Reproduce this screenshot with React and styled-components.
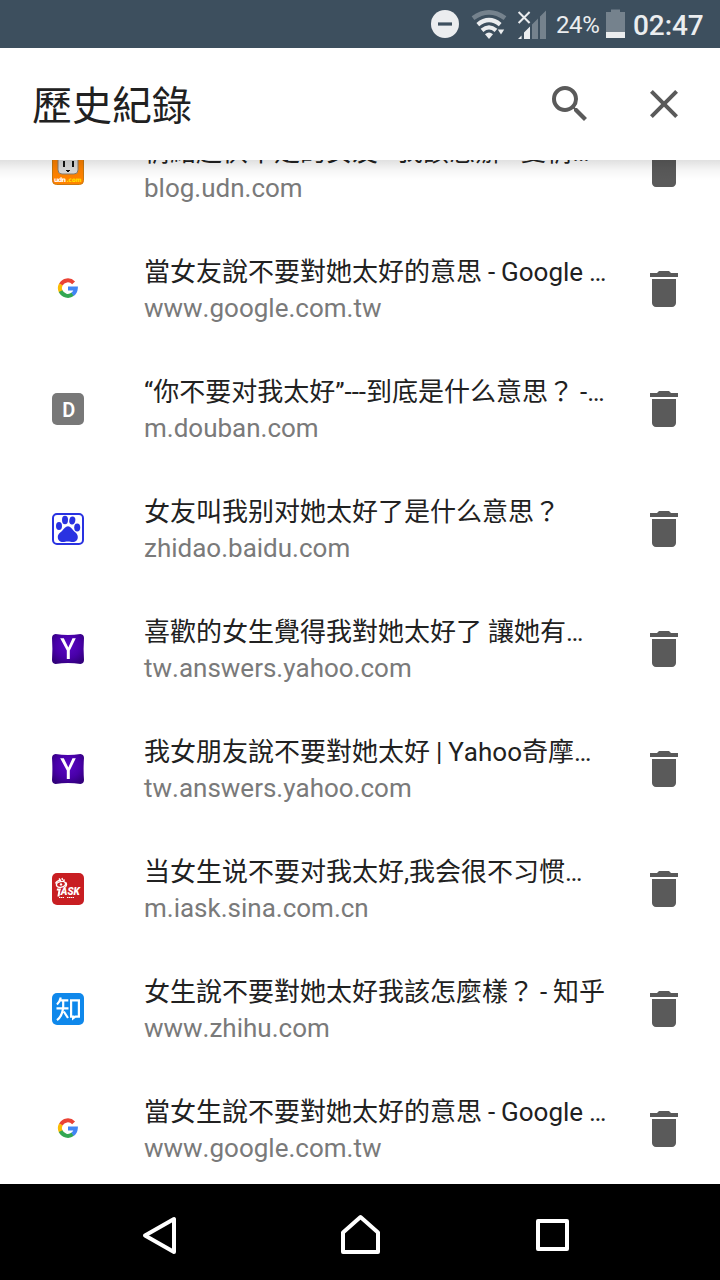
import styled, { createGlobalStyle } from "styled-components";

const GlobalStyle = createGlobalStyle`
  * {
    box-sizing: border-box;
  }
  body {
    margin: 0;
    background-color: #fff;
    font-family: Roboto, "Noto Sans CJK TC", sans-serif;
    font-kerning: none;
  }
`;

const Screen = styled.div`
  display: flex;
  flex-direction: column;
  width: 720px;
  height: 1280px;
  overflow: hidden;
  background-color: #fff;
`;

const StatusBar = styled.div`
  display: flex;
  flex-shrink: 0;
  align-items: center;
  justify-content: flex-end;
  height: 48px;
  padding-right: 16px;
  background-color: #3d4f5e;
  color: #ebedef;
  svg {
    display: block;
    flex-shrink: 0;
  }
`;

const Percent = styled.span`
  width: 43px;
  margin: 2px 7px 0 10px;
  font-size: 24px;
  line-height: 28px;
  letter-spacing: -0.4px;
  white-space: nowrap;
`;

const Clock = styled.span`
  width: 71px;
  margin: 3px 0 0 8px;
  font-size: 28px;
  font-weight: 500;
  line-height: 32px;
  letter-spacing: -0.1px;
  white-space: nowrap;
`;

const Toolbar = styled.header`
  position: relative;
  z-index: 1;
  display: flex;
  flex-shrink: 0;
  align-items: center;
  height: 112px;
  padding: 0 32px;
  background-color: #fff;
  &::after {
    content: "";
    position: absolute;
    top: 100%;
    left: 0;
    right: 0;
    height: 20px;
    background: linear-gradient(
      rgba(0, 0, 0, 0.12),
      rgba(0, 0, 0, 0.04) 50%,
      rgba(0, 0, 0, 0)
    );
  }
`;

const Title = styled.h1`
  flex: 1;
  margin: 0;
  padding-top: 5px;
  font-size: 40px;
  font-weight: 400;
  line-height: 48px;
  color: #212121;
`;

const IconButton = styled.button`
  display: block;
  width: 48px;
  height: 48px;
  margin-left: ${(props) => props.$gap || 0}px;
  padding: 0;
  border: none;
  background: none;
  color: #5a5a5a;
  svg {
    display: block;
    width: 48px;
    height: 48px;
  }
`;

const Viewport = styled.main`
  flex: 1;
  min-height: 0;
  overflow: hidden;
`;

// The list is scrolled a bit, so the first row is partly under the toolbar
const List = styled.ul`
  margin: -51px 0 0;
  padding: 0;
  list-style: none;
`;

const Row = styled.li`
  display: flex;
  align-items: center;
  height: 120px;
  padding: 0 32px 0 52px;
`;

const Favicon = styled.div`
  flex-shrink: 0;
  width: 32px;
  height: 32px;
  margin-right: 60px;
  svg {
    display: block;
  }
`;

const Info = styled.div`
  flex: 1;
  min-width: 0;
  padding: 2px 32px 0 0;
`;

const PageTitle = styled.p`
  margin: 0;
  font-size: 26px;
  line-height: 36px;
  word-spacing: -0.5px;
  color: #212121;
  white-space: nowrap;
`;

const Domain = styled.p`
  margin: 0;
  font-size: 26px;
  line-height: 36px;
  color: #7a7a7a;
  white-space: nowrap;
`;

const NavBar = styled.nav`
  display: flex;
  flex-shrink: 0;
  align-items: center;
  justify-content: space-between;
  height: 96px;
  padding: 6px 136px 0;
  background-color: #000;
`;

const NavIcon = styled.svg`
  display: block;
  width: 48px;
  height: 48px;
  fill: none;
  stroke: #fff;
  stroke-width: 4;
  stroke-linejoin: round;
`;

const StatusIcons = () => (
  <svg width="116" height="48" viewBox="430 0 116 48" fill="#ebedef">
    <circle cx="445" cy="24" r="14" />
    <rect x="438" y="22.4" width="14" height="3.2" fill="#3d4f5e" />
    <g fill="none" stroke="#ebedef">
      <path
        d="M473 18.2Q489 6.5 505 18.2"
        stroke="#75828d"
        strokeWidth="4.6"
      />
      <path d="M477.8 24.6Q489 15.6 500.2 24.6" strokeWidth="4.4" />
      <path d="M482 30.4Q489 24.4 496 30.4" strokeWidth="4.2" />
    </g>
    <path d="M485 34.2Q489 30.8 493 34.2L489 39z" />
    <path d="M497.8 29.6h6.4L501 34.4z" />
    <path d="M518.6 12l11 11M529.6 12l-11 11" stroke="#ebedef" strokeWidth="2" />
    <path d="M518 39l3.6-3.6V39zM524 32.5l6-6V39h-6z" />
    <path d="M532 24.5l6-6V39h-6zM540 16.5l6-6V39h-6z" fill="#75828d" />
  </svg>
);

const Battery = () => (
  <svg width="19" height="48" viewBox="606 0 19 48">
    <path d="M611 9.5h9V12h5v20h-19V12h5z" fill="#75828d" />
    <rect x="606" y="32" width="19" height="6" fill="#ebedef" />
  </svg>
);

const SearchIcon = () => (
  <svg viewBox="0 0 24 24" fill="currentColor">
    <path d="M15.5 14h-.79l-.28-.27A6.47 6.47 0 0 0 16 9.5 6.5 6.5 0 1 0 9.5 16c1.61 0 3.09-.59 4.23-1.57l.27.28v.79l5 4.99L20.49 19l-4.99-5zm-6 0C7.01 14 5 11.99 5 9.5S7.01 5 9.5 5 14 7.01 14 9.5 11.99 14 9.5 14z" />
  </svg>
);

const CloseIcon = () => (
  <svg viewBox="0 0 24 24" fill="currentColor">
    <path d="M19 6.41L17.59 5 12 10.59 6.41 5 5 6.41 10.59 12 5 17.59 6.41 19 12 13.41 17.59 19 19 17.59 13.41 12z" />
  </svg>
);

const TrashIcon = () => (
  <svg viewBox="0 0 24 24" fill="currentColor">
    <path d="M6 19c0 1.1.9 2 2 2h8c1.1 0 2-.9 2-2V7H6v12zM19 4h-3.5l-1-1h-5l-1 1H5v2h14V4z" />
  </svg>
);

const UdnIcon = () => (
  <svg width="32" height="32" viewBox="0 0 32 32">
    <rect x=".5" y=".5" width="31" height="31" rx="4" fill="#ff8200" stroke="#c9790f" />
    <rect x="6" y="3" width="20" height="18" rx="4" fill="#dcdcdc" stroke="#8b7d6a" />
    <path d="M11 8h2v6h-2zM20 8h2v6h-2zM14 17h4v1h-1v1h-2v-1h-1z" fill="#111" />
    <text x="2" y="28.6" fontFamily="DejaVu Sans" fontSize="6.4" fontWeight="700" fill="#fff" textLength="12">
      udn
    </text>
    <text x="14.5" y="28.6" fontFamily="DejaVu Sans" fontSize="6.2" fontWeight="700" fill="#ffe600" textLength="15" lengthAdjust="spacingAndGlyphs">
      .com
    </text>
  </svg>
);

const GoogleIcon = () => (
  <svg width="32" height="32" viewBox="0 0 32 32">
    <g fill="none" strokeWidth="4">
      <path d="M21.6 9.800A8 8 0 0 0 8.800 11.600" stroke="#ea4335" />
      <path d="M8.800 11.400A8 8 0 0 0 8.800 18.800" stroke="#fbbc05" />
      <path d="M8.600 18.200A8 8 0 0 0 20.800 21.200" stroke="#34a853" />
      <path d="M16 15.400h7.800A8 8 0 0 1 20.600 21.300" stroke="#4285f4" />
    </g>
  </svg>
);

const LetterIcon = () => (
  <svg width="32" height="32" viewBox="0 0 32 32">
    <rect width="32" height="32" rx="5" fill="#787878" />
    <text x="16.700" y="23.700" textAnchor="middle" fontFamily="Roboto" fontSize="20" fontWeight="600" fill="#fff">
      D
    </text>
  </svg>
);

const BaiduIcon = () => (
  <svg width="32" height="32" viewBox="0 0 32 32" fill="#2932e1">
    <rect x="1" y="1" width="30" height="30" rx="4" fill="#fff" stroke="#2932e1" strokeWidth="2" />
    <ellipse cx="7" cy="13" rx="3" ry="4" />
    <ellipse cx="13" cy="7" rx="3" ry="4.2" />
    <ellipse cx="20.3" cy="7.5" rx="3" ry="4" transform="rotate(10 20.3 7.5)" />
    <ellipse cx="25.2" cy="14.5" rx="3" ry="4" />
    <path d="M16 13.2c2.6 0 3.6 2.4 5.4 4.4s4.4 3.4 4.4 6.4c0 3.4-2.2 5-5 5-1.8 0-3-.6-5-.6s-3.2.6-5 .6c-2.8 0-5-1.6-5-5 0-3 2.8-4.400 4.600-6.400s3-4.400 5.600-4.400z" />
  </svg>
);

const YahooIcon = () => (
  <svg width="32" height="32" viewBox="0 0 32 32">
    <defs>
      <radialGradient id="yahoo" cx=".5" cy=".4" r=".65">
        <stop offset="0" stopColor="#5a08c4" />
        <stop offset=".6" stopColor="#4800a8" />
        <stop offset="1" stopColor="#32007c" />
      </radialGradient>
    </defs>
    <path
      d="M3.500 1Q16 3.200 28.500 1 32 1.500 32 5q-.800 11 0 22 0 3.500-3.500 4-12.500-2.200-25 0Q0 30.500 0 27q.800-11 0-22Q0 1.500 3.500 1z"
      fill="url(#yahoo)"
    />
    <path d="M8.200 5.200h3.600l4.500 9.200 4.200-9.200h3.300l-6 12.400V26h-3v-8.400z" fill="#fff" />
  </svg>
);

const IaskIcon = () => (
  <svg width="32" height="32" viewBox="0 0 32 32">
    <rect width="32" height="32" rx="5" fill="#c81e22" />
    <g fill="none" stroke="#fff" strokeWidth="1.4">
      <ellipse cx="9" cy="11.4" rx="4.6" ry="2.8" transform="rotate(-12 9 11.4)" />
      <path d="M3.5 10.5Q5 7 9 7.4M7 5.500l1.500 2M10 5l.5 2M12.500 6.500l-1 1.500M13.500 9.500q2 1 0 4.500" />
    </g>
    <circle cx="9" cy="11.4" r="1.2" fill="#fff" />
    <path d="M5 15.500h4.200l-.8 2-.9 6H5.400l1-6H4.700z" fill="#fff" />
    <text x="8.8" y="22.4" fontFamily="Roboto" fontSize="10.5" fontWeight="900" fontStyle="italic" fill="#fff" textLength="19" lengthAdjust="spacingAndGlyphs">
      ASK
    </text>
    <path d="M7 24.500h5M15 24.500h7" stroke="#fff" strokeWidth="1.2" strokeDasharray="1.5 .5" />
  </svg>
);

const ZhihuIcon = () => (
  <svg width="32" height="32" viewBox="0 0 32 32">
    <rect width="32" height="32" rx="5" fill="#0f88eb" />
    <g fill="none" stroke="#fff" strokeWidth="2.2">
      <path d="M8.8 4.500Q7.700 9 5 11.500M8 7.400h8.300M4.500 15.400h12M11.200 7.400v6.500Q10.500 23 5 27.200M11.800 18.500l4.200 6.500" />
      <path d="M19.100 7.400h7.800v16.200h-3.600l-2.200 1.700v-1.700h-2z" />
    </g>
  </svg>
);

const HISTORY = [
  { icon: UdnIcon, title: "情緒起伏不定的女友 - 我該怎辦 - 愛情…", domain: "blog.udn.com" },
  { icon: GoogleIcon, title: "當女友說不要對她太好的意思 - Google …", domain: "www.google.com.tw" },
  { icon: LetterIcon, title: "“你不要对我太好”---到底是什么意思？ -…", domain: "m.douban.com" },
  { icon: BaiduIcon, title: "女友叫我别对她太好了是什么意思？", domain: "zhidao.baidu.com" },
  { icon: YahooIcon, title: "喜歡的女生覺得我對她太好了 讓她有…", domain: "tw.answers.yahoo.com" },
  { icon: YahooIcon, title: "我女朋友說不要對她太好 | Yahoo奇摩…", domain: "tw.answers.yahoo.com" },
  { icon: IaskIcon, title: "当女生说不要对我太好,我会很不习惯…", domain: "m.iask.sina.com.cn" },
  { icon: ZhihuIcon, title: "女生說不要對她太好我該怎麼樣？ - 知乎", domain: "www.zhihu.com" },
  { icon: GoogleIcon, title: "當女生說不要對她太好的意思 - Google …", domain: "www.google.com.tw" },
];

export default function App() {
  return (
    <Screen>
      <GlobalStyle />
      <StatusBar>
        <StatusIcons />
        <Percent>24%</Percent>
        <Battery />
        <Clock>02:47</Clock>
      </StatusBar>
      <Toolbar>
        <Title>歷史紀錄</Title>
        <IconButton aria-label="搜尋">
          <SearchIcon />
        </IconButton>
        <IconButton aria-label="關閉" $gap={46}>
          <CloseIcon />
        </IconButton>
      </Toolbar>
      <Viewport>
        <List>
          {HISTORY.map(({ icon: Icon, title, domain }, i) => (
            <Row key={i}>
              <Favicon>
                <Icon />
              </Favicon>
              <Info>
                <PageTitle>{title}</PageTitle>
                <Domain>{domain}</Domain>
              </Info>
              <IconButton aria-label="移除">
                <TrashIcon />
              </IconButton>
            </Row>
          ))}
        </List>
      </Viewport>
      <NavBar>
        <NavIcon viewBox="0 0 48 48">
          <path d="M38 8v33L9 24.500z" />
        </NavIcon>
        <NavIcon viewBox="0 0 48 48">
          <path d="M24.500 6L42 21.500V41H7V21.500z" />
        </NavIcon>
        <NavIcon viewBox="0 0 48 48">
          <rect x="2" y="10" width="29" height="28" />
        </NavIcon>
      </NavBar>
    </Screen>
  );
}
